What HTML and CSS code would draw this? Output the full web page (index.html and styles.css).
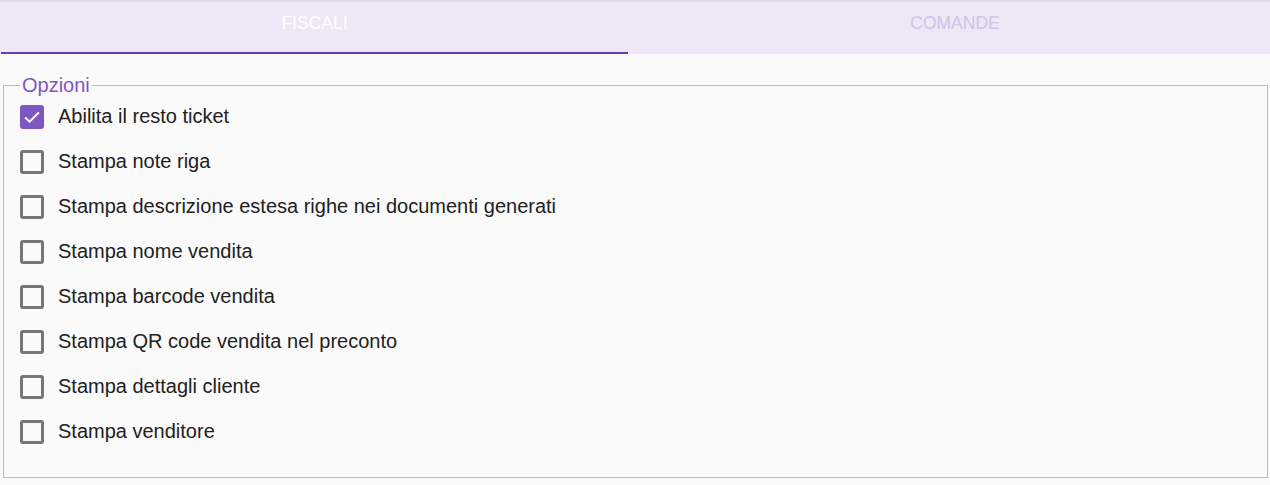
FILE: index.html
```html
<!DOCTYPE html>
<html lang="it">
<head>
<meta charset="UTF-8">
<meta name="viewport" content="width=device-width, initial-scale=1.0">
<title>Impostazioni stampa</title>
<link rel="stylesheet" href="styles.css">
</head>
<body>

    <!-- Tab bar -->
    <div class="tabs">
        <div class="tab active">Fiscali</div>
        <div class="tab">Comande</div>
    </div>

    <fieldset class="options">
        <legend>Opzioni</legend>
        <label class="option">
            <span class="box checked">
                <svg viewBox="0 0 24 24" width="22" height="22"><path d="M4.5 12.5l4.8 4.6L19.5 7" fill="none" stroke="#fff" stroke-width="2.2"/></svg>
            </span>
            Abilita il resto ticket
        </label>
        <label class="option"><span class="box"></span>Stampa note riga</label>
        <label class="option"><span class="box"></span>Stampa descrizione estesa righe nei documenti generati</label>
        <label class="option"><span class="box"></span>Stampa nome vendita</label>
        <label class="option"><span class="box"></span>Stampa barcode vendita</label>
        <label class="option"><span class="box"></span>Stampa QR code vendita nel preconto</label>
        <label class="option"><span class="box"></span>Stampa dettagli cliente</label>
        <label class="option"><span class="box"></span>Stampa venditore</label>
    </fieldset>

</body>
</html>
```

FILE: styles.css
```css
body {
    font-family: "Liberation Sans", Arial, sans-serif;
    margin: 0;
    padding: 0;
    background-color: #fafafa;
    color: #212121;
}
.tabs {
    display: grid;
    grid-template-columns: 627px 1fr;
    gap: 12px;
    padding-left: 1px;
    height: 54px;
    background: linear-gradient(to bottom, #dcd5e6 0, #ebe4f3 3px, #ede7f6 5px);
}
.tab {
    text-align: center;
    text-transform: uppercase;
    font-size: 17.5px;
    line-height: 20px;
    padding-top: 13px;
    color: #d1c4e9;
    box-sizing: border-box;
    height: 54px;
}
.tab.active {
    color: #ffffff;
    border-bottom: 2px solid #673ab7;
}
.options {
    margin: 22px 2px 6px 3px;
    padding: 0 16px 23px 16px;
    border: 1px solid #bdbdbd;
}
.options legend {
    color: #7e57c2;
    font-size: 20px;
    line-height: 18px;
    padding: 0 2px;
}
.option {
    display: flex;
    align-items: center;
    gap: 14px;
    height: 45px;
    font-size: 20px;
    cursor: pointer;
}
.box {
    width: 24px;
    height: 24px;
    box-sizing: border-box;
    border: 3px solid #767676;
    border-radius: 3px;
    display: flex;
    align-items: center;
    justify-content: center;
}
.box.checked {
    background-color: #7e57c2;
    border: none;
}
```
